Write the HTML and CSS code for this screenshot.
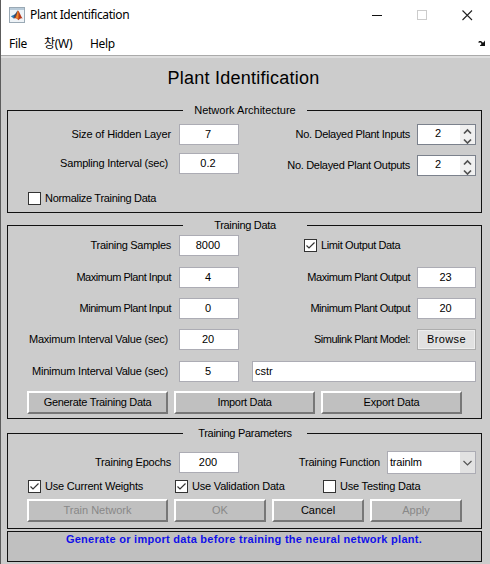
FILE: index.html
```html
<!DOCTYPE html>
<html lang="en">
<head>
<meta charset="utf-8">
<title>Plant Identification</title>
<link rel="stylesheet" href="styles.css">
</head>
<body>
<div class="window">
  <header class="titlebar">
    <svg class="logo" width="16" height="16" viewBox="0 0 16 16">
      <rect x=".5" y=".5" width="15" height="15" fill="#eef3f7" stroke="#9aa9b5"/>
      <path d="M1 1h14v2H1z" fill="#b9cbd9"/>
      <path d="M1.8 9.3 5 7.7l2 1.6-2.2 2.3z" fill="#2d7db8"/>
      <path d="M5 7.7C7 7.5 7.4 4 9 3.6L7.4 9.5 4.8 11.6z" fill="#35506e"/>
      <path d="M9 3.5c1.8 1.500 2.600 6 5 8.300-2-1.300-3 .200-4.700 1.400C8.400 11.500 7 10.500 4.800 11.600 7.200 9.500 7.800 5.500 9 3.500z" fill="#b6391c"/>
      <path d="M9 3.600c.900 3 .4 6 .3 9.200-.7-1.300-1.500-2-2.600-2.100C8 8.500 8.200 5.500 9 3.600z" fill="#ef8a2a"/>
    </svg>
    <span class="caption">Plant Identification</span>
    <svg class="controls" width="102" height="12" viewBox="0 0 102 12" fill="none">
      <path d="M0 6.500h10" stroke="#111"/>
      <rect x="45.500" y="1.500" width="9" height="9" stroke="#ccc"/>
      <path d="M90.500 1.500l9.500 9.500M100 1.500l-9.500 9.500" stroke="#222" stroke-width="1.100"/>
    </svg>
  </header>
  <nav class="menu">
    <span class="m-file">File</span><span class="m-win">창(W)</span><span class="m-help">Help</span>
    <svg class="dock" width="8" height="7" viewBox="0 0 8 7">
      <path d="M0 2.300 1.300 1H3l2 1.800L6.500 1.300V.800H7V6H2V5.500L3.600 4 2.300 2.300 1.500 2.800z" fill="#111"/>
    </svg>
  </nav>
  <main class="figure">
    <h1><span class="title-text">Plant Identification</span></h1>

    <section class="panel network">
      <div class="legend"><i></i><span>Network Architecture</span><i></i></div>
      <div class="columns">
        <div class="left">
          <div class="row r1"><label class="slight">Size of Hidden Layer</label><div class="field">7</div></div>
          <div class="row r2 sec"><label class="snug">Sampling Interval (sec)</label><div class="field">0.2</div></div>
        </div>
        <div class="right">
          <div class="row r1"><label class="close">No. Delayed Plant Inputs</label><div class="field spin"><b>2</b>
            <svg width="15" height="19" viewBox="0 0 15 19"><path d="M0 0h15v19H0z" fill="#f0f0f0"/><path d="M4 8.500 7.500 5 11 8.500M4 14.500 7.500 18 11 14.500" fill="none" stroke="#505050" stroke-width="1.700"/></svg></div></div>
          <div class="row r3"><label class="close">No. Delayed Plant Outputs</label><div class="field spin"><b>2</b>
            <svg width="15" height="19" viewBox="0 0 15 19"><path d="M0 0h15v19H0z" fill="#f0f0f0"/><path d="M4 8.500 7.500 5 11 8.500M4 14.500 7.500 18 11 14.500" fill="none" stroke="#505050" stroke-width="1.700"/></svg></div></div>
        </div>
      </div>
      <div class="check normalize"><svg width="13" height="13" viewBox="0 0 13 13"><rect x=".5" y=".5" width="12" height="12" fill="#fff" stroke="#333"/></svg><span class="close">Normalize Training Data</span></div>
    </section>

    <section class="panel data">
      <div class="legend"><i></i><span class="close">Training Data</span><i></i></div>
      <div class="columns">
        <div class="left">
          <div class="row"><label class="close">Training Samples</label><div class="field">8000</div></div>
          <div class="row"><label class="tight">Maximum Plant Input</label><div class="field">4</div></div>
          <div class="row"><label class="tight">Minimum Plant Input</label><div class="field">0</div></div>
          <div class="row sec"><label class="snug">Maximum Interval Value (sec)</label><div class="field">20</div></div>
          <div class="row sec"><label class="snug">Minimum Interval Value (sec)</label><div class="field">5</div></div>
        </div>
        <div class="right">
          <div class="row limit"><div class="check"><svg width="13" height="13" viewBox="0 0 13 13"><rect x=".5" y=".5" width="12" height="12" fill="#fff" stroke="#333"/><path d="M2.500 6.500 5 9 10.500 3.500" fill="none" stroke="#333" stroke-width="1.200"/></svg><span class="closer">Limit Output Data</span></div></div>
          <div class="row"><label class="tight">Maximum Plant Output</label><div class="field">23</div></div>
          <div class="row"><label class="tight">Minimum Plant Output</label><div class="field">20</div></div>
          <div class="row"><label class="tight">Simulink Plant Model:</label><div class="browse"><span>Browse</span></div></div>
          <div class="row"><div class="field model">cstr</div></div>
        </div>
      </div>
      <div class="buttons">
        <div class="btn"><span class="close">Generate Training Data</span></div>
        <div class="btn"><span class="close">Import Data</span></div>
        <div class="btn"><span class="snug">Export Data</span></div>
      </div>
    </section>

    <section class="panel params">
      <div class="legend"><i></i><span class="close">Training Parameters</span><i></i></div>
      <div class="columns">
        <div class="left"><div class="row"><label class="snug">Training Epochs</label><div class="field">200</div></div></div>
        <div class="right"><div class="row"><label class="snug">Training Function</label><div class="select"><span class="snug">trainlm</span>
          <svg width="15" height="21" viewBox="0 0 15 21"><path d="M0 0h15v21H0z" fill="#e2e2e2"/><path d="M3.500 9 7.500 13 11.500 9" fill="none" stroke="#555" stroke-width="1.200"/></svg></div></div></div>
      </div>
      <div class="checks">
        <div class="check"><svg width="13" height="13" viewBox="0 0 13 13"><rect x=".5" y=".5" width="12" height="12" fill="#fff" stroke="#333"/><path d="M2.500 6.500 5 9 10.500 3.500" fill="none" stroke="#333" stroke-width="1.200"/></svg><span class="snug">Use Current Weights</span></div>
        <div class="check"><svg width="13" height="13" viewBox="0 0 13 13"><rect x=".5" y=".5" width="12" height="12" fill="#fff" stroke="#333"/><path d="M2.500 6.500 5 9 10.500 3.500" fill="none" stroke="#333" stroke-width="1.200"/></svg><span class="snug">Use Validation Data</span></div>
        <div class="check"><svg width="13" height="13" viewBox="0 0 13 13"><rect x=".5" y=".5" width="12" height="12" fill="#fff" stroke="#333"/></svg><span class="snug">Use Testing Data</span></div>
      </div>
      <div class="buttons actions">
        <div class="btn off"><span>Train Network</span></div>
        <div class="btn off"><span>OK</span></div>
        <div class="btn"><span>Cancel</span></div>
        <div class="btn off"><span>Apply</span></div>
      </div>
    </section>

    <div class="message"><span>Generate or import data before training the neural network plant.</span></div>
  </main>
</div>
</body>
</html>
```
FILE: styles.css
```css
* { box-sizing: border-box; }
body { margin: 0; background: #fff; overflow: hidden; }
.window {
  width: 490px; height: 564px; border-left: 1px solid #5c5c5c;
  font: 11px/13px "Liberation Sans", Arial, sans-serif; color: #000;
  white-space: nowrap;
}
svg { display: block; flex: none; }
.slight { letter-spacing: -.13px; }
.snug { letter-spacing: -.2px; }
.close { letter-spacing: -.3px; }
.closer { letter-spacing: -.37px; }
.tight { letter-spacing: -.46px; }
.titlebar { height: 29px; display: flex; align-items: center; padding-left: 8px; }
.caption {
  width: 100px; margin-left: 5px; font: 12px/16px "Noto Sans", sans-serif;
  letter-spacing: -0.38px;
}
.controls { margin-left: 242px; }
.menu {
  height: 26px; display: flex; align-items: center; padding: 3px 4px 0 8px;
  font: 12px/16px "Noto Sans", "Noto Sans CJK KR", sans-serif; letter-spacing: -0.3px;
}
.m-file { width: 35px; }
.m-win { width: 46px; }
.dock { margin-left: auto; }
.figure {
  height: 509px; background: #ccc; border-top: 1px solid #aaa;
  box-shadow: inset 0 2px #dedede; padding-left: 6px;
}
h1 { margin: 0; height: 54px; width: 475px; padding-top: 12px; font: 18px/21px "Liberation Sans", Arial, sans-serif; text-align: center; letter-spacing: .25px; }
.title-text { margin-right: 2px; }
.panel { width: 475px; border: 1px solid #111; border-top: 0; }
.network { height: 103px; }
.data { height: 194px; margin-top: 12px; }
.params { height: 96px; margin-top: 14px; }
.legend { display: flex; height: 1px; margin: 0 -1px; align-items: center; justify-content: space-between; }
.legend i { width: 176px; height: 1px; background: #111; }
.legend i:last-child { width: 175px; }
.columns { display: flex; }
.left { width: 231px; }
.right { width: 237px; }
.row { display: flex; justify-content: flex-end; align-items: center; height: 21px; }
.field {
  width: 60px; height: 21px; margin-left: 8px; border: 1px solid #acacb4;
  background: #fff; text-align: center; line-height: 19px; padding-right: 2px;
}
.right .field { margin-left: 7px; width: 59px; }
.sec label { margin-right: 3px; }
.network .columns { padding-top: 13px; height: 81px; }
.network .r2 { margin-top: 8px; }
.network .r3 { margin-top: 10px; }
.right .spin { display: flex; justify-content: space-between; border-color: #7b818c; padding: 0; }
.spin b { font-weight: normal; padding-left: 17px; line-height: 17px; }
.check { display: flex; align-items: center; gap: 4px; height: 13px; }
.normalize { margin-left: 20px; }
.data .columns { padding-top: 9px; height: 165px; }
.data .row + .row { margin-top: 11px; }
.data .row:nth-child(3), .data .row:nth-child(4) { margin-top: 10px; }
.limit { justify-content: flex-start; padding-left: 65px; }
.browse {
  width: 59px; height: 21px; margin-left: 7px; border: 1px solid #adadad; box-shadow: inset 0 0 0 1px #eee;
  background: #e1e1e1; text-align: center; line-height: 19px; letter-spacing: .35px;
}
.right .model { width: 224px; text-align: left; padding-left: 2px; }
.buttons { display: flex; gap: 6px; margin-left: 19px; }
.btn {
  width: 141px; height: 23px; background: #c0c0c0; text-align: center; line-height: 19px;
  border: 2px solid; border-color: #fff #777 #777 #fff;
}
.off { color: #888; }
.actions .btn { width: 92px; }
.actions .btn:first-child { width: 141px; }
.params .columns { padding-top: 18px; height: 46px; align-items: flex-start; }
.select {
  width: 89px; height: 23px; margin-left: 7px; border: 1px solid #acacb4; background: #fff;
  display: flex; justify-content: space-between; align-items: center; padding-left: 2px;
}
.checks { display: grid; grid-template-columns: 147px 148px 1fr; margin-left: 20px; }
.actions { margin-top: 6px; }
.message {
  width: 475px; height: 31px; margin-top: 2px; border: 1px solid #111; background: #c0c0c0;
  text-align: center; font-weight: bold; color: #1010e8; padding: 1px 1px 0 0; letter-spacing: .28px;
}
```
